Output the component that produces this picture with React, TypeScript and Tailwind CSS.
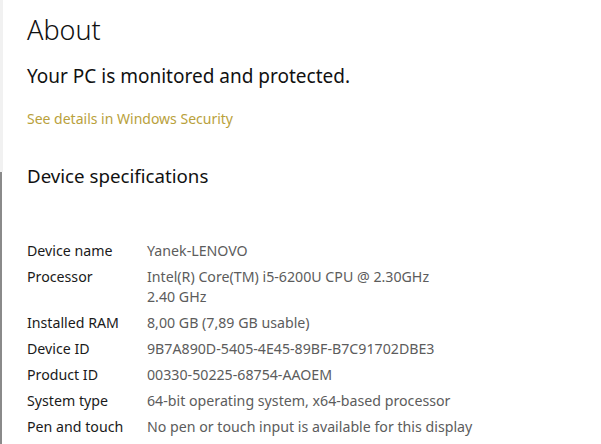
const specs: { label: string; value: string[] }[] = [
  { label: 'Device name', value: ['Yanek-LENOVO'] },
  { label: 'Processor', value: ['Intel(R) Core(TM) i5-6200U CPU @ 2.30GHz', '2.40 GHz'] },
  { label: 'Installed RAM', value: ['8,00 GB (7,89 GB usable)'] },
  { label: 'Device ID', value: ['9B7A890D-5405-4E45-89BF-B7C91702DBE3'] },
  { label: 'Product ID', value: ['00330-50225-68754-AAOEM'] },
  { label: 'System type', value: ['64-bit operating system, x64-based processor'] },
  { label: 'Pen and touch', value: ['No pen or touch input is available for this display'] },
];

export default function App() {
  return (
    <div
      className="flex h-[444px] w-[601px] overflow-hidden bg-white"
      style={{ fontFamily: '"Noto Sans", "Open Sans", sans-serif' }}
    >
      {/* window edge */}
      <div className="flex w-[3px] flex-col">
        <div className="h-[172px] bg-[#f1f1f1]" />
        <div className="flex-1 border-l-2 border-[#8a8a8a]" />
      </div>

      <main className="flex-1 pl-[24px]">
        <h1 className="mt-[12px] text-[27px] leading-[36px] font-light text-[#111]">About</h1>
        <p className="mt-[16px] text-[19px] leading-[24px] text-[#111]">
          Your PC is monitored and protected.
        </p>
        <a className="mt-[21px] block text-[14px] leading-[20px] text-[#b9a13c]">
          See details in Windows Security
        </a>

        <h2 className="mt-[34px] text-[18.7px] leading-[26px] text-[#111]">Device specifications</h2>

        <div className="mt-[52px] flex flex-col gap-[6px] text-[14.2px] leading-[20px]">
          {specs.map((s) => (
            <div key={s.label} className="flex">
              <div className="w-[120px] text-[#1a1a1a]">{s.label}</div>
              <div className="text-[#5c5c5c]">
                {s.value.map((v) => (
                  <div key={v}>{v}</div>
                ))}
              </div>
            </div>
          ))}
        </div>
      </main>
    </div>
  );
}
